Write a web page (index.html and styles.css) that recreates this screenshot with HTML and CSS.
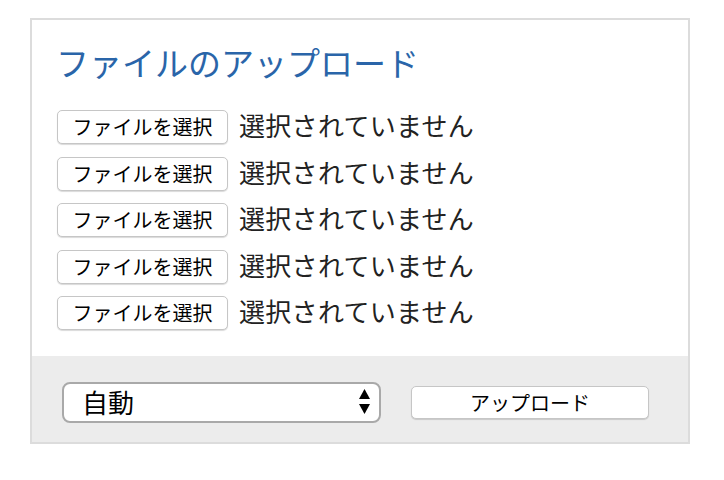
FILE: index.html
```html
<!DOCTYPE html>
<html lang="ja">
<head>
    <meta charset="UTF-8">
    <meta name="viewport" content="width=device-width, initial-scale=1.0">
    <title>ファイルのアップロード</title>
    <link rel="stylesheet" href="styles.css">
</head>
<body>
    <div class="panel">
        <div class="panel-body">
            <h1 class="title">ファイルのアップロード</h1>
            <div class="files">
                <div class="file-row">
                    <button type="button" class="file-btn">ファイルを選択</button>
                    <span class="file-status">選択されていません</span>
                </div>
                <div class="file-row">
                    <button type="button" class="file-btn">ファイルを選択</button>
                    <span class="file-status">選択されていません</span>
                </div>
                <div class="file-row">
                    <button type="button" class="file-btn">ファイルを選択</button>
                    <span class="file-status">選択されていません</span>
                </div>
                <div class="file-row">
                    <button type="button" class="file-btn">ファイルを選択</button>
                    <span class="file-status">選択されていません</span>
                </div>
                <div class="file-row">
                    <button type="button" class="file-btn">ファイルを選択</button>
                    <span class="file-status">選択されていません</span>
                </div>
            </div>
        </div>
        <!-- Footer -->
        <div class="panel-footer">
            <div class="select">
                <span>自動</span>
                <svg class="arrows" width="11" height="25" viewBox="0 0 11 25">
                    <polygon points="5.5,0 11,10 0,10" fill="#000"/>
                    <polygon points="0,15 11,15 5.5,25" fill="#000"/>
                </svg>
            </div>
            <button type="button" class="upload-btn">アップロード</button>
        </div>
    </div>
</body>
</html>
```

FILE: styles.css
```css
body {
    margin: 0;
    font-family: "Noto Sans CJK JP", sans-serif;
    background-color: #fff;
    color: #222;
}
.panel {
    margin: 18px 0 0 30px;
    width: 656px;
    border: 2px solid #dcdcdc;
}
.panel-body {
    padding: 22px 25px 26px 24px;
}
.title {
    margin: 0;
    font-size: 33px;
    line-height: 40px;
    font-weight: normal;
    color: #2a65a9;
}
.files {
    margin-top: 28px;
    display: flex;
    flex-direction: column;
    gap: 12.5px;
}
.file-row {
    display: flex;
    align-items: center;
    gap: 11px;
    height: 34px;
    padding-left: 1px;
}
.file-btn,
.upload-btn {
    font-family: "Noto Sans CJK JP", sans-serif;
    font-size: 20px;
    line-height: 1;
    color: #000;
    background-color: #fff;
    border: 1px solid #c6c6c6;
    border-radius: 5px;
    box-shadow: 0 1px 1px rgba(0,0,0,0.15);
    cursor: pointer;
}
.file-btn {
    height: 34px;
    width: 171px;
    padding: 0;
}
.file-status {
    font-size: 26px;
    line-height: 34px;
    padding-bottom: 4px;
    letter-spacing: 0.3px;
}
.panel-footer {
    box-sizing: border-box;
    height: 86px;
    padding: 7px 0 0 30px;
    background-color: #ececec;
    display: flex;
    align-items: center;
}
.select {
    box-sizing: border-box;
    width: 319px;
    height: 41px;
    padding: 0 9px 2px 18px;
    border: 2px solid #a9a9a9;
    border-radius: 8px;
    background-color: #fff;
    display: flex;
    align-items: center;
    justify-content: space-between;
    font-size: 26px;
    color: #000;
}
.arrows {
    display: block;
}
.upload-btn {
    margin-left: 30px;
    width: 238px;
    height: 33px;
    padding: 0;
}
```
